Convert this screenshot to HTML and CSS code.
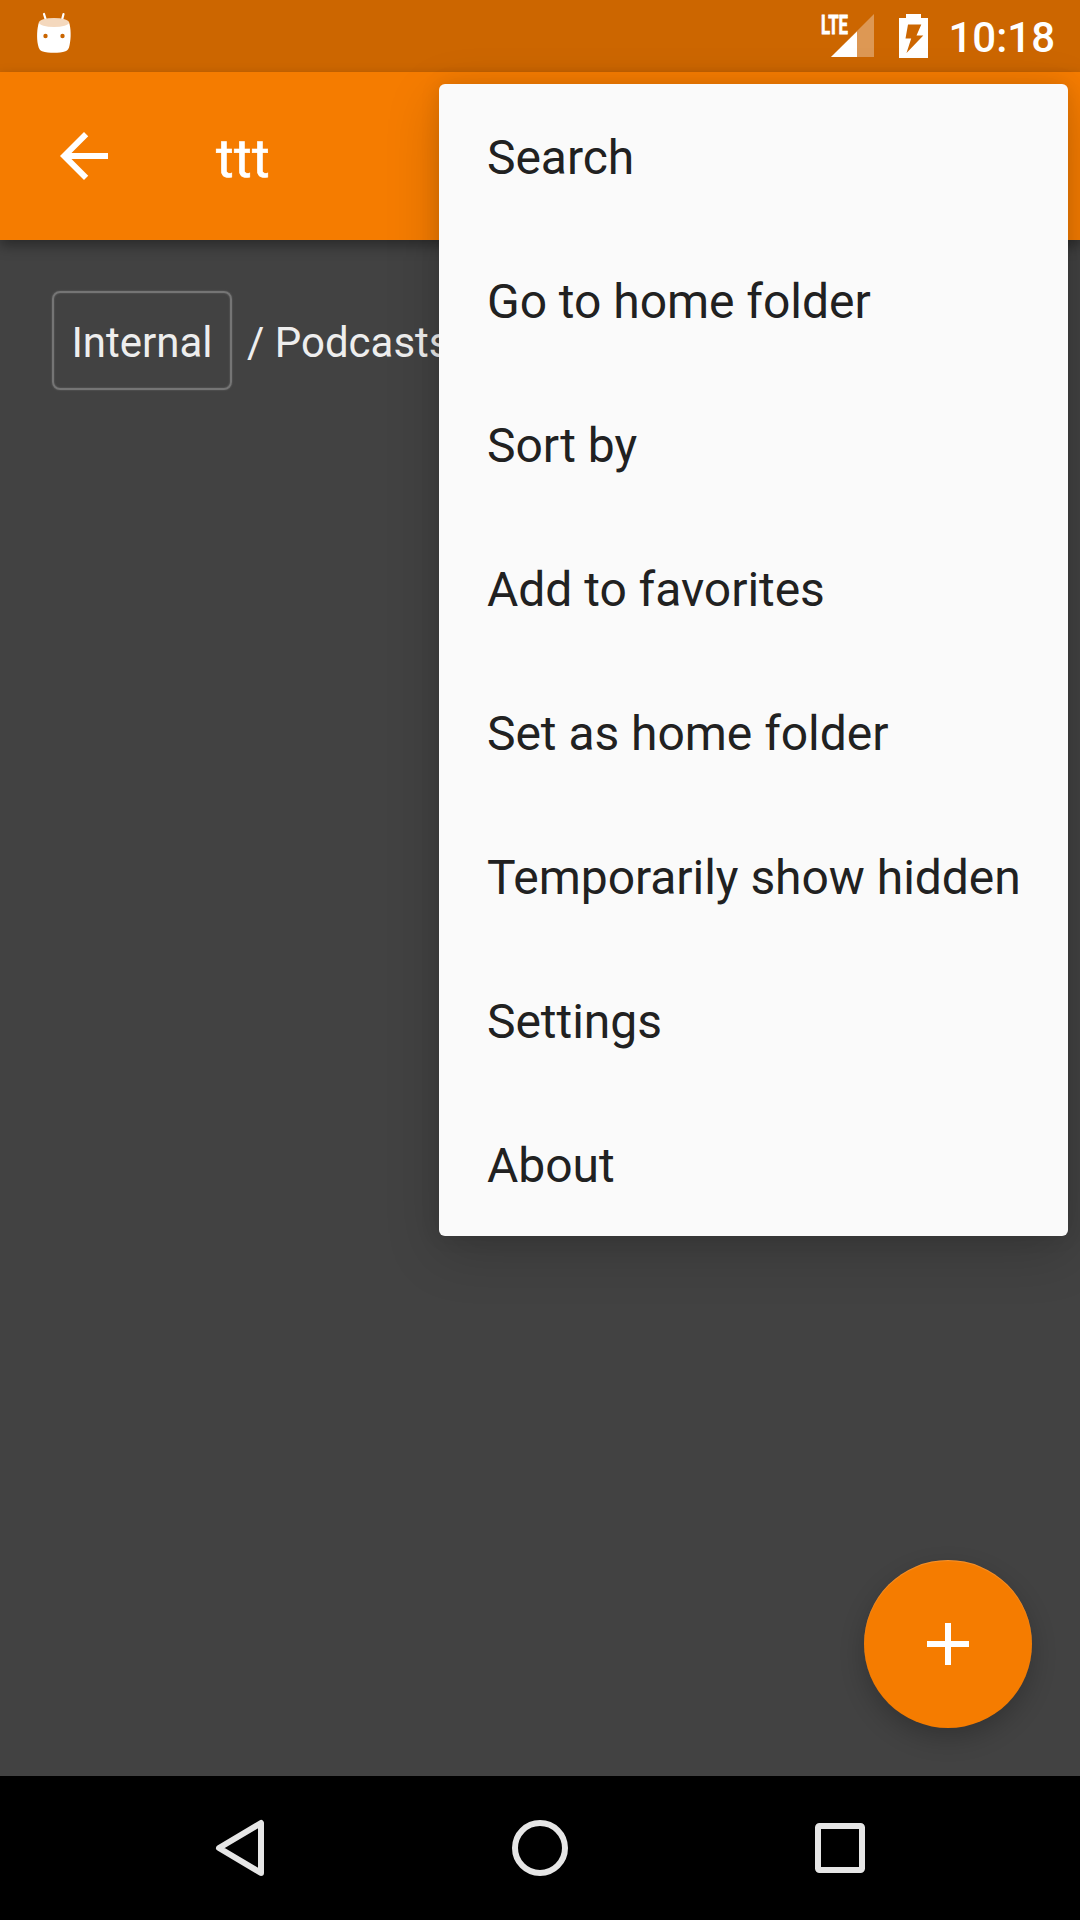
FILE: index.html
```html
<!DOCTYPE html>
<html lang="en">
<head>
<meta charset="utf-8">
<title>ttt</title>
<link rel="stylesheet" href="styles.css">
</head>
<body>
<div class="screen">
  <header class="status">
    <svg class="status-bot" width="36" height="44" viewBox="0 0 36 44">
      <path d="M8 2L10.500 10M27.500 2L25.500 10" stroke="#fff" stroke-width="2.200" stroke-linecap="round"/>
      <path d="M3 10C1 16 0.500 26 2 33C2.800 37 4 38.500 6 39.200C13 41.300 23 41.300 29.500 39.200C31.700 38.500 33 37 33.600 33C35.300 26 35 16 33 10Z" fill="#fff"/>
      <ellipse cx="18" cy="10.500" rx="15" ry="4.500" fill="#f4d8bd"/>
      <circle cx="9.500" cy="24" r="2.200" fill="#ca6500"/>
      <circle cx="26.500" cy="24" r="2.200" fill="#ca6500"/>
    </svg>
    <div class="status-right">
      <svg class="signal" width="54" height="46" viewBox="0 0 54 46">
        <path d="M53 1V44H10Z" fill="#fff" fill-opacity=".33"/>
        <path d="M36 18.500V44H10Z" fill="#fff"/>
        <text class="lte" x="0" y="20.500" textLength="27" lengthAdjust="spacingAndGlyphs">LTE</text>
      </svg>
      <svg class="battery" width="29" height="44" viewBox="0 0 29 44">
        <path fill="#fff" fill-rule="evenodd" d="M7 0H22V4H29V44H0V4H7ZM9 10.500L6.500 24.500H12.200L7.500 39L24.300 21.500H17.500L22.300 10.500Z"/>
      </svg>
      <span class="clock">10:18</span>
    </div>
  </header>
  <div class="appbar">
    <svg width="72" height="72" viewBox="0 0 24 24"><path fill="#fff" d="M20 11H7.830l5.590-5.590L12 4l-8 8 8 8 1.410-1.410L7.830 13H20v-2z"/></svg>
    <h1 class="title">ttt</h1>
  </div>
  <main class="content">
    <div class="crumbs">
      <span class="crumb-box">Internal</span>
      <span class="crumb">/ Podcasts</span>
    </div>
  </main>
  <nav class="navbar">
    <svg width="60" height="60" viewBox="0 0 60 60"><path d="M51 5V55L9 30Z" class="nav-line"/></svg>
    <svg width="60" height="60" viewBox="0 0 60 60"><circle cx="30" cy="30" r="25" class="nav-line"/></svg>
    <svg width="60" height="60" viewBox="0 0 60 60"><rect x="8" y="8" width="44" height="44" rx="1.500" class="nav-line"/></svg>
  </nav>
  <button class="fab" aria-label="Add"><svg width="72" height="72" viewBox="0 0 24 24"><path fill="#fff" d="M19 13h-6v6h-2v-6H5v-2h6V5h2v6h6z"/></svg></button>
  <ul class="menu">
    <li>Search</li>
    <li>Go to home folder</li>
    <li>Sort by</li>
    <li>Add to favorites</li>
    <li>Set as home folder</li>
    <li>Temporarily show hidden</li>
    <li>Settings</li>
    <li>About</li>
  </ul>
</div>
</body>
</html>
```
FILE: styles.css
```css
* { box-sizing: border-box; }
body { margin: 0; font-family: Roboto, sans-serif; }
.screen {
  position: relative;
  display: flex;
  flex-direction: column;
  width: 1080px;
  height: 1920px;
  overflow: hidden;
  background: #424242;
}
.status {
  display: flex;
  justify-content: space-between;
  height: 72px;
  padding: 12px 25px 0 36px;
  background: #cc6600;
}
.status-right { display: flex; align-items: flex-start; }
.signal { margin: 1px 24px 0 0; overflow: visible; }
.battery { margin: 2px 20px 0 0; }
.lte {
  font: 700 26px Roboto, sans-serif;
  fill: #fff;
  stroke: #fff;
  stroke-width: .8;
}
.clock {
  padding-top: 1px;
  font-size: 42px;
  font-weight: 500;
  line-height: 50px;
  color: #fff;
}
.appbar {
  display: flex;
  align-items: center;
  gap: 96px;
  height: 168px;
  padding: 0 48px;
  background: #f57c00;
  box-shadow: 0 6px 12px rgba(0, 0, 0, .36);
}
.title {
  margin: 4px 0 0;
  font-size: 54px;
  font-weight: 400;
  letter-spacing: .3px;
  color: #fff;
  -webkit-text-stroke: .6px #fff;
}
.content { flex: 1; padding: 51px 52px; }
.crumbs {
  display: flex;
  align-items: center;
  gap: 15px;
  font-size: 42px;
  color: #eee;
  white-space: nowrap;
}
.crumb-box {
  display: flex;
  align-items: center;
  justify-content: center;
  width: 180px;
  height: 99px;
  padding-top: 3px;
  border: 2px solid #757575;
  border-radius: 8px;
  box-shadow: 0 0 2px rgba(160, 160, 160, .4), inset 0 0 2px rgba(160, 160, 160, .4);
}
.crumb { padding-top: 3px; }
.navbar {
  display: flex;
  justify-content: center;
  align-items: center;
  gap: 240px;
  height: 144px;
  background: #000;
}
.nav-line {
  fill: none;
  stroke: #e6e6e6;
  stroke-width: 6;
  stroke-linejoin: round;
}
.fab {
  position: absolute;
  right: 48px;
  bottom: 192px;
  display: grid;
  place-items: center;
  width: 168px;
  height: 168px;
  padding: 0;
  border: 0;
  border-radius: 50%;
  background: #f57c00;
  box-shadow: 0 10px 24px rgba(0, 0, 0, .22), inset 0 1px 1px rgba(255, 255, 255, .18);
}
.menu {
  position: absolute;
  top: 84px;
  left: 439px;
  width: 629px;
  margin: 0;
  padding: 0;
  list-style: none;
  border-radius: 6px;
  background: #fafafa;
  box-shadow: 0 16px 54px rgba(0, 0, 0, .18), 0 0 20px rgba(0, 0, 0, .1);
}
.menu li {
  display: flex;
  align-items: center;
  height: 144px;
  padding: 2px 48px 0;
  font-size: 48px;
  letter-spacing: -.04px;
  color: #212121;
  white-space: nowrap;
}
```
